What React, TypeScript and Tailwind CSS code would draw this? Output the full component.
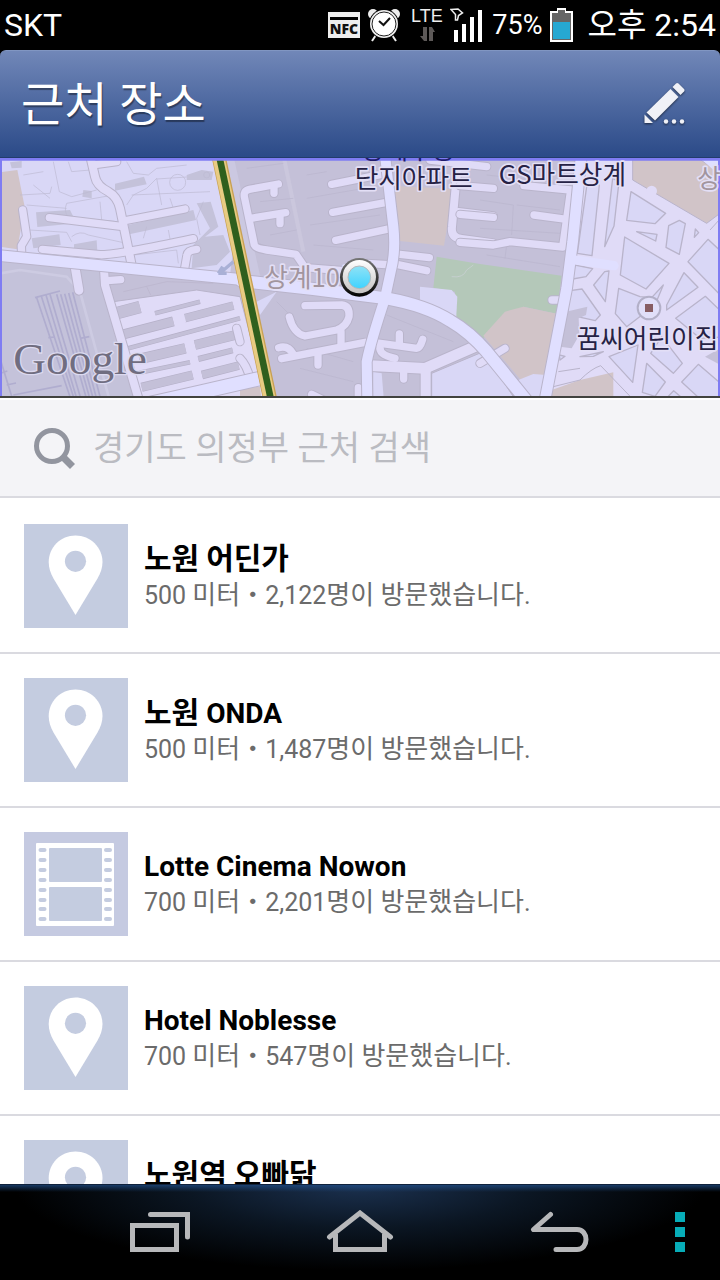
import React from 'react'

type PlaceKind = 'pin' | 'film'

interface PlaceModel {
    id: number
    name: string
    distance: string
    visitors: string
    kind: PlaceKind
}

const PLACES: PlaceModel[] = [
    { id: 1, name: '노원 어딘가', distance: '500 미터', visitors: '2,122명이 방문했습니다.', kind: 'pin' },
    { id: 2, name: '노원 ONDA', distance: '500 미터', visitors: '1,487명이 방문했습니다.', kind: 'pin' },
    { id: 3, name: 'Lotte Cinema Nowon', distance: '700 미터', visitors: '2,201명이 방문했습니다.', kind: 'film' },
    { id: 4, name: 'Hotel Noblesse', distance: '700 미터', visitors: '547명이 방문했습니다.', kind: 'pin' },
    { id: 5, name: '노원역 오빠닭', distance: '700 미터', visitors: '1,024명이 방문했습니다.', kind: 'pin' },
]

interface RoadModel {
    d: string
    w?: number
}

// casings go under every road first so that junctions stay open
function Roads({ roads, color = '#e0dbf7' }: { roads: RoadModel[]; color?: string }) {
    return (
        <g fill="none" strokeLinecap="round" strokeLinejoin="round">
            {roads.map((r) => <path key={'c' + r.d} d={r.d} stroke="#b9b4cb" strokeWidth={(r.w ?? 22) + 6} />)}
            {roads.map((r) => <path key={r.d} d={r.d} stroke={color} strokeWidth={r.w ?? 22} />)}
        </g>
    )
}

const WEST_ROADS: RoadModel[] = [
    { d: 'M270 0 L285 65 Q290 92 325 110 Q352 125 360 160 L395 330', w: 24 },
    { d: 'M290 28 L350 20' },
    { d: 'M148 188 L370 215' },
    { d: 'M370 198 L555 162' },
    { d: 'M127 283 L300 299 Q340 302 580 251' },
    { d: 'M68 165 L80 245 L64 272 L65 300' },
    { d: 'M554 340 L561 300 Q563 286 590 283' },
    { d: 'M225 335 L237 406', w: 26 },
    { d: 'M312 340 L315 390 L418 740', w: 24 },
    { d: 'M322 377 L362 374' },
]

const CENTER_ROADS: RoadModel[] = [
    { d: 'M115 87 L28 103 Q8 107 14 130 L43 270 Q47 280 80 285 L168 298 L195 338 L320 348' },
    { d: 'M102 95 V115' },
    { d: 'M32 190 L137 173' },
    { d: 'M120 180 V206' },
    { d: 'M275 88 L440 55' },
    { d: 'M278 172 L440 142' },
    { d: 'M287 256 L450 221' },
    { d: 'M380 325 L460 330' },
    { d: 'M480 298 L568 308' },
    { d: 'M470 328 L560 347' },
    { d: 'M655 10 L636 215 Q632 248 665 252 L760 265', w: 24 },
    { d: 'M655 170 L760 183' },
    { d: 'M570 15 L740 35' },
    { d: 'M195 452 L305 450 Q330 453 327 485 Q320 515 290 525 L195 543 Q160 535 148 486' },
    { d: 'M303 530 V568' },
    { d: 'M125 611 L375 562' },
    { d: 'M116 578 Q145 570 160 598' },
    { d: 'M234 600 V630' },
    { d: 'M400 562 L530 580 Q540 580 548 553' },
    { d: 'M478 570 V537' },
    { d: 'M420 575 Q416 600 465 610' },
    { d: 'M390 632 L555 640 L720 568', w: 32 },
    { d: 'M557 640 V740', w: 30 },
    { d: 'M491 650 V672' },
    { d: 'M355 698 V740' },
    { d: 'M215 718 L250 735' },
    { d: 'M-10 520 L0 560' },
    { d: 'M0 610 Q20 630 30 670' },
]

const EAST_ROADS: RoadModel[] = [
    { d: 'M-60 92 L40 100' },
    { d: 'M-60 178 L40 187' },
    { d: 'M-60 262 L40 270 L90 260 L248 276 L272 105 L132 92' },
    { d: 'M162 180 L260 193' },
    { d: 'M216 435 H250' },
    { d: 'M0 625 L75 580' },
]

const MAJOR_ROADS: RoadModel[] = [
    { d: 'M-20 300 L720 373', w: 32 },
    { d: 'M725 378 L940 402 L1160 430 Q1280 452 1350 497 Q1410 532 1460 590 L1590 750', w: 36 },
    { d: 'M1155 0 L1180 215 Q1188 290 1172 350 L1155 430 Q1112 560 1100 620 L1102 740', w: 30 },
    { d: 'M430 750 L600 712 L790 668', w: 40 },
    { d: 'M1744 0 L1718 260 L1700 400 L1634 740', w: 32 },
]

// [x1, y1, x2, y2, thickness] of the apartment blocks between the alleys
const APARTMENT_BARS: number[][] = [
    [352, 474, 420, 456, 34],
    [465, 475, 600, 440, 10],
    [370, 538, 520, 499, 26],
    [552, 490, 700, 452, 22],
    [385, 580, 720, 490, 10],
    [418, 612, 556, 580, 28],
    [585, 570, 706, 540, 26],
    [418, 653, 570, 622, 10],
    [595, 612, 698, 586, 14],
    [425, 697, 578, 660, 24],
    [606, 660, 716, 632, 22],
    [620, 697, 716, 672, 10],
]

const EAST_BLOCKS: string[] = [
    '320,95 358,90 336,302 292,295',
    '398,70 417,80 402,213 374,275',
    '453,110 557,175 525,206 440,196',
    '434,246 567,325 498,402 421,360',
    '470,230 531,238 527,258',
    '566,212 598,196 616,206 598,298 558,277',
    '646,222 656,233 643,247',
    '684,253 740,305 740,440 624,320',
    '612,353 654,397 560,465 560,450',
    '416,400 480,425 515,428 550,390 525,450 440,515 406,476',
    '374,350 387,348 376,440 341,390',
    '285,330 338,341 318,365 278,372',
    '270,407 306,402 361,480 346,497 262,478',
    '676,424 740,485 740,545 660,550 587,490',
    '500,625 556,681 525,724 487,712',
    '655,628 745,705 745,745 680,750 605,681',
    '545,545 607,625 580,655 512,595',
    '387,605 474,570 458,682',
    '581,707 625,745 545,745',
    '238,600 255,604 240,615',
    '300,605 370,590 340,604',
]

function PlaceMap() {
    return (
        <svg viewBox="0 9 2160 720" preserveAspectRatio="xMidYMid slice" className="block h-[240px] w-full font-['Noto_Sans_CJK_KR',sans-serif]" role="img" aria-label="지도">
            <defs>
                <linearGradient id="markerRing" x1="0" y1="0" x2="0" y2="1">
                    <stop offset="0" stopColor="#777" />
                    <stop offset="1" stopColor="#000" />
                </linearGradient>
                <linearGradient id="markerBody" x1="0" y1="0" x2="0" y2="1">
                    <stop offset="0" stopColor="#fff" />
                    <stop offset="1" stopColor="#c4c2c2" />
                </linearGradient>
                <linearGradient id="markerDot" x1="0" y1="0" x2="0" y2="1">
                    <stop offset="0" stopColor="#8fe2f6" />
                    <stop offset="1" stopColor="#3fd3ff" />
                </linearGradient>
            </defs>
            <rect y="0" width="2160" height="740" fill="#c4c0d8" />

            {/* west side */}
            <polygon points="0,0 640,0 700,280 690,360 0,300" fill="#d9d7f6" />
            <polygon points="0,52 52,45 74,155 52,283 0,275" fill="#d1c4c8" />
            <g fill="#c4c2da">
                <polygon points="345,86 432,65 440,88 345,107" />
                <polygon points="108,172 210,165 230,205 112,216" />
                <polygon points="95,250 178,238 182,270 100,280" />
                <polygon points="222,268 290,256 292,290 222,282" />
                <polygon points="385,210 580,165 588,195 388,238" />
                <polygon points="560,60 605,45 640,50 635,75 560,75" />
                <polygon points="590,145 632,140 655,215 615,245 670,240 690,290 650,330 575,340 580,270 630,220" />
                <polygon points="250,105 275,108 275,130 247,125" />
                <polygon points="30,22 65,18 65,38 35,40" />
            </g>
            <g fill="none" stroke="#bdb9d2" strokeWidth="2">
                <path d="M70 60 L130 50 M160 20 L178 110 L215 125 L290 105 M60 120 L150 115 L155 95 M200 145 L340 120 M205 20 L215 50 L270 45" />
                <path d="M200 145 Q190 170 205 185 L350 200 M215 245 Q240 225 265 240 L380 265 M300 140 L305 195" />
                <path d="M380 20 L400 55 L445 60 L470 40 L560 30 M470 70 L485 150 M470 72 L560 66 M395 120 L630 110" />
                <circle cx="533" cy="82" r="24" />
                <circle cx="620" cy="60" r="9" />
                <path d="M380 150 L400 120 L440 100 L470 70 M510 130 L520 160 M430 250 L440 215 M505 225 L512 262 M400 300 L530 285 L535 325 M610 140 L590 190 L600 240" />
                <path d="M80 150 L200 160 M90 225 L200 232 L215 260 M100 90 L150 130" />
            </g>
            <polygon points="0,318 310,348 400,740 0,740" fill="#c4c2da" />
            <path d="M0 355 L60 345 L200 365 L240 410 L330 740" fill="none" stroke="#cdcbe2" strokeWidth="8" />
            <g stroke="#b0adcf" strokeWidth="5" fill="none">
                <path d="M110 428 L215 740 M124 424 L225 740 M138 420 L233 740 M150 418 L245 740" />
                <path d="M170 418 L262 740 M182 418 L272 740 M194 416 L282 740 M206 414 L292 740 M218 412 L304 740" />
                <path d="M105 428 L180 408 M145 548 L165 546 M240 550 L268 545 M40 720 L185 692 M0 610 L40 740 M0 655 L22 648 M20 690 L48 684" />
            </g>
            <polygon points="340,440 590,405 720,425 800,729 405,740 345,480" fill="#e0dbf7" stroke="#b9b4cb" strokeWidth="3" />
            <g>
                {APARTMENT_BARS.map(([x1, y1, x2, y2, w]) => (
                    <g key={`${x1}-${y1}`}>
                        <line x1={x1} y1={y1} x2={x2} y2={y2} stroke="#b5b0c8" strokeWidth={w + 4} />
                        <line x1={x1} y1={y1} x2={x2} y2={y2} stroke="#c4c0d8" strokeWidth={w} />
                    </g>
                ))}
                <path d="M540 475 L548 505 M568 560 L608 720" stroke="#e0dbf7" strokeWidth="22" />
            </g>
            <path d="M370 410 L500 380 L640 385 M440 395 L452 420" fill="none" stroke="#b9b4cb" strokeWidth="2" />
            <Roads roads={WEST_ROADS} />

            {/* centre */}
            <g transform="translate(720 0)">
                <path d="M130 0 L190 290" fill="none" stroke="#cbc7dd" strokeWidth="12" />
                <path d="M20 40 L130 25 M200 60 L260 50 M200 130 L400 95 M210 210 L420 180 M60 140 L160 130 M90 240 L170 225 M220 270 L400 285 M110 440 L170 500 M200 580 L340 620 M440 480 L640 560 M180 640 L340 680" fill="none" stroke="#bab5cd" strokeWidth="2" />
                <polygon points="450,92 640,102 612,272 480,258" fill="#d1c4c8" />
                <polygon points="-20,0 -45,0 20,360 60,400 100,410 60,360" fill="#d2cfe9" opacity="0.5" />
                <polygon points="50,440 110,410 60,480" fill="#d9d7f6" />
                <polygon points="400,650 425,655 432,740 400,740" fill="#d9d7f6" />
                <polygon points="575,655 730,590 830,740 575,740" fill="#d9d7f6" stroke="#b9b4cb" strokeWidth="3" />
                <polygon points="0,700 60,695 65,740 0,740" fill="#d1c4c8" />
            </g>
            <path d="M1310 305 L1440 327 L1685 362 L1670 476 L1570 455 L1450 550 L1365 490 L1365 410 L1300 398 Z" fill="#b4c8b9" />
            <path d="M1355 365 Q1390 370 1400 345 L1420 330" fill="none" stroke="#c5cfce" strokeWidth="3" />
            <polygon points="1260,395 1355,405 1372,425 1368,500 1260,445" fill="#d9d7f6" />
            <path d="M1450 542 L1515 470 L1570 455 L1670 476 L1640 665 L1560 672 Z" fill="#d1c4c8" />
            <path d="M1555 675 L1600 657 L1640 660 L1630 740 L1580 740 Z" fill="#d9d7f6" />
            <g transform="translate(720 0)">
                <Roads roads={CENTER_ROADS} />
            </g>

            {/* east side */}
            <g transform="translate(1440 0)">
                <path d="M290 0 H740 V740 H190 L250 450 Z" fill="#e0dbf7" />
                <polygon points="458,0 640,0 730,60 740,160 680,205 458,75" fill="#d1c4c8" stroke="#b9b4cb" strokeWidth="3" />
                <polygon points="650,0 740,0 740,80" fill="#e0dfff" />
                <path d="M690 225 L740 170" stroke="#b9b4cb" strokeWidth="3" />
                <circle cx="515" cy="108" r="16" fill="#e0dbf7" />
                <g fill="#d9d7f6" stroke="#b9b4cb" strokeWidth="4" strokeLinejoin="round">
                    {EAST_BLOCKS.map((p) => <polygon key={p} points={p} />)}
                </g>
                <polygon points="258,470 322,455 318,480 296,490 298,540 275,580 240,575" fill="#c4c0d8" />
                <path d="M215 705 L300 675 L400 652 V740 H215 Z" fill="#d1c4c8" />
                <path d="M220 695 L300 675 Q335 640 362 632 L455 729 M235 650 L300 640" fill="none" stroke="#b9b4cb" strokeWidth="3" />
                <polygon points="675,605 740,570 740,640" fill="#c4c0d8" />
                <path d="M20 60 L250 85 M0 135 L100 150 L95 240 M110 150 L240 165 M0 220 L240 235 M20 300 L240 335 M80 270 L75 310" fill="none" stroke="#bab5cd" strokeWidth="2" />
                <Roads roads={EAST_ROADS} />
            </g>

            <Roads roads={MAJOR_ROADS} color="#e0dfff" />
            <path d="M1725 315 L1842 332" stroke="#e0dfff" strokeWidth="28" strokeLinecap="round" />
            <path d="M700 320 L665 350 M655 355 L668 335 M655 355 L680 355" stroke="#a9b0d6" strokeWidth="10" fill="none" />

            {/* subway line */}
            <path d="M655 0 L812 740" stroke="#c8a052" strokeWidth="42" />
            <path d="M654 0 L811 740" stroke="#e8cb82" strokeWidth="36" />
            <path d="M657 0 L814 740" stroke="#2f5f1d" strokeWidth="20" />

            {/* selection edge */}
            <path d="M0 13 H2160" stroke="#7f7cf3" strokeWidth="8" />
            <path d="M3 9 V729" stroke="#7f7cf3" strokeWidth="6" />
            <path d="M2157 9 V729" stroke="#7f7cf3" strokeWidth="6" />

            {/* labels */}
            <g fontSize="77" stroke="#e3dff6" strokeWidth="10" strokeLinejoin="round" paintOrder="stroke">
                <text x="1064" y="98" fill="#262245">단지아파트</text>
                <text x="1496" y="86" fill="#262245">GS마트상계</text>
                <text x="1730" y="580" fill="#262245">꿈씨어린이집</text>
                <text x="2092" y="100" fill="#a2959e">상계</text>
                <text x="793" y="396" fill="#a2959e">상계10동</text>
            </g>
            <text x="1083" y="13" fontSize="77" fill="#201b6e">상계주공</text>
            <text x="40" y="656" fontSize="136" fill="#706d80" stroke="#dcdaf0" strokeWidth="8" paintOrder="stroke" className="font-['Liberation_Serif',serif]">Google</text>

            <circle cx="1947" cy="459" r="34" fill="#e1dff9" stroke="#b3b0c8" strokeWidth="6" />
            <rect x="1935" y="447" width="24" height="24" fill="#875d63" />

            <circle cx="1078" cy="367" r="58" fill="url(#markerRing)" />
            <circle cx="1078" cy="365" r="50" fill="url(#markerBody)" />
            <circle cx="1078" cy="367" r="34" fill="url(#markerDot)" stroke="#b5b9bb" strokeWidth="3" />

            <path d="M0 726 H2160" stroke="#42433f" strokeWidth="6" />
        </svg>
    )
}

// Hangul sits a step larger than the Latin letters and digits beside it
function MixedText({ text, hangulClass }: { text: string; hangulClass: string }) {
    return (
        <>
            {text.split(/([가-힣]+)/).filter(Boolean).map((part, index) => (
                /[가-힣]/.test(part) ? <span key={index} className={hangulClass}>{part}</span> : part
            ))}
        </>
    )
}

function PlaceIcon({ kind }: { kind: PlaceKind }) {
    if (kind === 'film') {
        const holes = [16, 26, 36, 46, 56, 66, 75, 85]
        return (
            <svg viewBox="0 0 104 104" className="size-[104px] shrink-0 bg-[#c5cae1]" aria-hidden="true">
                <rect x="12" y="11" width="78" height="83" rx="1" fill="#fff" />
                <g fill="#c4cce0">
                    <rect x="25" y="16" width="53" height="34" rx="1" />
                    <rect x="25" y="55" width="53" height="34" rx="1" />
                    {holes.map((y) => (
                        <React.Fragment key={y}>
                            <rect x="14.5" y={y} width="8" height="4" rx="2" />
                            <rect x="80" y={y} width="8" height="4" rx="2" />
                        </React.Fragment>
                    ))}
                </g>
            </svg>
        )
    }
    return (
        <svg viewBox="0 0 104 104" className="size-[104px] shrink-0 bg-[#c4cce0]" aria-hidden="true">
            <path d="M51.5 11.5 C36.5 11.5 24.7 23.5 24.7 38 C24.7 44 26.5 49 29.5 54.5 L51.5 91 L73.5 54.5 C76.5 49 78.5 44 78.5 38 C78.5 23.5 66.5 11.5 51.5 11.5 Z" fill="#fff" />
            <circle cx="51.5" cy="37.3" r="10.6" fill="#c4cce0" />
        </svg>
    )
}

function StatusBar() {
    return (
        <div className="flex h-[50px] shrink-0 items-center bg-black px-1 text-white">
            <span className="text-[32px]">SKT</span>
            <div className="ml-auto flex items-center">
                <svg viewBox="0 0 32 26" className="mr-2 h-[26px] w-8" aria-label="NFC">
                    <rect width="32" height="26" fill="#eee" />
                    <rect x="2" y="5" width="28" height="3" fill="#000" />
                    <text x="16" y="22" textAnchor="middle" fontSize="14" fontWeight="800" fill="#111" className="font-['Open_Sans',sans-serif]">NFC</text>
                </svg>
                <svg viewBox="0 0 32 34" className="mr-[11px] h-[34px] w-8" aria-hidden="true">
                    <circle cx="5" cy="6" r="5" fill="#eee" />
                    <circle cx="27" cy="6" r="5" fill="#eee" />
                    <path d="M8 27 L4 33 M24 27 L28 33" stroke="#eee" strokeWidth="2" />
                    <circle cx="16" cy="16" r="15" fill="#000" />
                    <circle cx="16" cy="16" r="14" fill="#eee" />
                    <circle cx="16" cy="16" r="12" fill="#fff" stroke="#222" strokeWidth="1" />
                    <path d="M11 13 L15.5 17 L22 10" fill="none" stroke="#111" strokeWidth="2" />
                </svg>
                <svg viewBox="0 0 33 34" className="mr-[6px] h-[34px] w-[33px]" aria-label="LTE">
                    <text x="0" y="14" fontSize="18" fill="#eee" className="font-['Liberation_Sans',sans-serif]">LTE</text>
                    <path d="M12 19 H16 V33 H13 L9 28 H12 Z M18 33 V19 H21 L24 24 H22 V33 Z" fill="#5d5958" />
                </svg>
                <svg viewBox="0 0 34 34" className="mr-2 h-[34px] w-[34px]" aria-hidden="true">
                    <path d="M1 1.5 L8 1 L12.5 5 L8.5 7.5 L7.5 12 H5.5 V6.5 Z" fill="none" stroke="#eee" strokeWidth="1.5" />
                    <path d="M4 22 H8 V34 H4 Z M12 16 H16 V34 H12 Z M20 9 H24 V34 H20 Z M28 2 H32 V34 H28 Z" fill="#fff" />
                </svg>
                <span className="text-[27px]">75%</span>
                <svg viewBox="0 0 23 34" className="mr-[14px] ml-2 h-[34px] w-[23px]" aria-hidden="true">
                    <path d="M7 0 H16 V3 H23 V34 H0 V3 H7 Z" fill="#fff" />
                    <path d="M8 2 H15 V5 H21 V32 H2 V5 H8 Z" fill="#666" />
                    <rect x="3" y="14" width="17" height="17" fill="#26a8d2" />
                </svg>
                <span className="text-[32px] whitespace-nowrap">오후 2:54</span>
            </div>
        </div>
    )
}

function HeaderBar() {
    return (
        <div className="bg-black">
            <header className="flex h-[108px] items-center justify-between rounded-t-md border-t border-b border-t-[#8196c2] border-b-[#223c6c] bg-linear-to-b from-[#7187b8] to-[#2b4a88] pr-[34px] pl-[21px]">
                <h1 className="text-[47px] leading-none text-white [text-shadow:1px_2px_1px_rgba(0,0,0,0.4)]">근처 장소</h1>
                <button type="button" aria-label="글쓰기" className="cursor-pointer">
                    <svg viewBox="0 0 44 44" className="block size-11" fill="#f0f1f7">
                        <g className="drop-shadow-[0_1px_1px_rgba(0,0,0,0.6)]">
                            <path d="M34 1.5 Q35 0.5 36.5 1.5 L42 7 Q43 8 42 9.5 L38.5 13 L30.5 5 Z" />
                            <path d="M28.5 7 L36.5 15 L13 38.5 L4.5 30.5 Z" />
                            <path d="M2.5 32.5 L11 41 H2.5 Z" />
                            <circle cx="24" cy="39.5" r="2.2" />
                            <circle cx="32" cy="39.5" r="2.2" />
                            <circle cx="40" cy="39.5" r="2.2" />
                        </g>
                    </svg>
                </button>
            </header>
        </div>
    )
}

function NavBar() {
    return (
        <nav className="flex h-24 shrink-0 items-center border-t border-[#10223c] bg-black bg-[linear-gradient(to_bottom,rgba(32,80,140,0.7),transparent_7px),radial-gradient(ellipse_48%_90%_at_50%_0%,#1b3150,#0b1623_50%,transparent)] pr-5 pb-px pl-[60px]">
            <button type="button" aria-label="최근 앱" className="flex flex-1 justify-center">
                <svg viewBox="0 0 60 44" className="h-11 w-[60px]" fill="none" stroke="#b7b8ba" strokeWidth="5">
                    <rect x="2.5" y="15.5" width="44" height="24" />
                    <path d="M20.5 4.5 H57.5 V27" strokeLinecap="round" />
                </svg>
            </button>
            <button type="button" aria-label="홈" className="flex flex-1 justify-center">
                <svg viewBox="0 0 68 44" className="h-11 w-[68px]" fill="none" stroke="#b7b8ba" strokeWidth="5">
                    <path d="M3.5 27 L34 3 L64.5 27" strokeLinecap="round" />
                    <path d="M9.5 24 V39.5 H58.5 V24" />
                </svg>
            </button>
            <button type="button" aria-label="뒤로" className="flex flex-1 justify-center">
                <svg viewBox="0 0 60 44" className="h-11 w-[60px]" fill="none" stroke="#b7b8ba" strokeWidth="5" strokeLinecap="round" strokeLinejoin="round">
                    <path d="M20.5 4.5 L3.5 19.5 H47 C59 19.5 59 39.5 47 39.5 H26" />
                </svg>
            </button>
            <button type="button" aria-label="메뉴" className="flex w-10 flex-col items-center gap-[5px]">
                <span className="size-[10px] bg-[#07adb8]" />
                <span className="size-[10px] bg-[#07adb8]" />
                <span className="size-[10px] bg-[#07adb8]" />
            </button>
        </nav>
    )
}

function App() {
    const [keyword, setKeyword] = React.useState('')

    return (
        <div className="flex h-screen flex-col overflow-hidden bg-white font-[Roboto,'Noto_Sans_CJK_KR',sans-serif]">
            <StatusBar />
            <main className="flex min-h-0 flex-1 flex-col">
                <HeaderBar />
                <PlaceMap />
                <label className="flex h-[100px] shrink-0 items-center gap-[17px] border-t-2 border-b-2 border-t-white border-b-[#dadae0] bg-[#f4f4f7] pl-8">
                    <svg viewBox="0 0 44 44" className="size-11 shrink-0" fill="none" stroke="#92959f" aria-hidden="true">
                        <circle cx="20" cy="20" r="15.5" strokeWidth="5" />
                        <path d="M30 30 L40.5 40.5" strokeWidth="7" />
                    </svg>
                    <input
                        type="text"
                        aria-label="장소 검색"
                        value={keyword}
                        onChange={(e) => setKeyword(e.target.value)}
                        placeholder="경기도 의정부 근처 검색"
                        className="min-w-0 flex-1 bg-transparent text-[34px] text-[#555] outline-none placeholder:text-[#babbc1]"
                    />
                </label>
                <ul className="min-h-0 flex-1 overflow-hidden pt-[2px]">
                    {
                        PLACES.map((item) => {
                            return <li key={item.id} className="border-b-2 border-[#dadae0]">
                                <a href="#" className="flex gap-4 px-6 py-6">
                                    <PlaceIcon kind={item.kind} />
                                    <div className="min-w-0 pt-[17px]">
                                        <h2 className="truncate text-[28px] leading-9 font-bold text-black">
                                            <MixedText text={item.name} hangulClass="text-[30px]" />
                                        </h2>
                                        <p className="truncate text-[25px] leading-[34px] text-[#6b6b6b]">
                                            <MixedText text={`${item.distance}・${item.visitors}`} hangulClass="text-[26px]" />
                                        </p>
                                    </div>
                                </a>
                            </li>
                        })
                    }
                </ul>
            </main>
            <NavBar />
        </div>
    )
}

export default App
